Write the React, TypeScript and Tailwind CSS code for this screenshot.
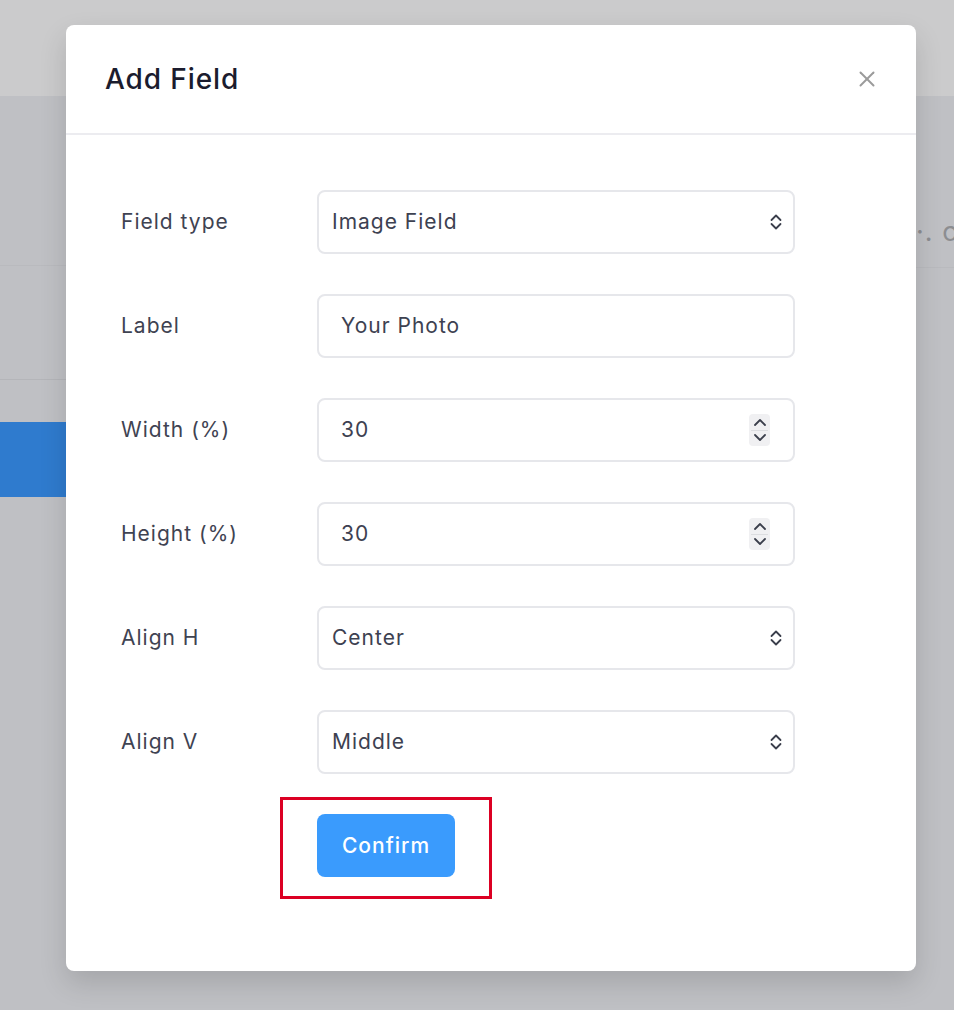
import { X } from "lucide-react";

const font = { fontFamily: "Inter, 'Noto Sans', sans-serif" };

function SelectArrows() {
  return (
    <svg width="14" height="20" viewBox="0 0 14 20" fill="none" stroke="#3b3f4c" strokeWidth="1.8" strokeLinecap="round" strokeLinejoin="round">
      <path d="M2.5 8 L7 3.5 L11.5 8" />
      <path d="M2.5 12 L7 16.5 L11.5 12" />
    </svg>
  );
}

function Spinner() {
  return (
    <div className="flex h-[32px] w-[21px] flex-col items-center justify-between rounded-[4px] bg-[#f0f0f2] py-[2px]">
      <svg width="16" height="13" viewBox="0 0 16 13" fill="none" stroke="#3b3f4c" strokeWidth="1.8" strokeLinecap="round" strokeLinejoin="round">
        <path d="M3 9 L8 4 L13 9" />
      </svg>
      <div className="h-px w-[17px] bg-[#dcdde0]" />
      <svg width="16" height="13" viewBox="0 0 16 13" fill="none" stroke="#3b3f4c" strokeWidth="1.8" strokeLinecap="round" strokeLinejoin="round">
        <path d="M3 4 L8 9 L13 4" />
      </svg>
    </div>
  );
}

const rows = [
  { label: "Field type", value: "Image Field", kind: "select" },
  { label: "Label", value: "Your Photo", kind: "text" },
  { label: "Width (%)", value: "30", kind: "number" },
  { label: "Height (%)", value: "30", kind: "number" },
  { label: "Align H", value: "Center", kind: "select" },
  { label: "Align V", value: "Middle", kind: "select" },
];

export default function App() {
  return (
    <div className="relative h-[1010px] w-full overflow-hidden bg-[#bfc0c4]" style={font}>
      {/* Page behind the overlay */}
      <div className="h-[96px] bg-[#cbcbcc]" />
      <div className="flex justify-between">
        <div className="w-[66px]">
          <div className="h-[169px]" />
          <div className="h-px bg-[#b9babe]" />
          <div className="h-[113px]" />
          <div className="h-px bg-[#b4b5b9]" />
          <div className="h-[42px]" />
          <div className="h-[75px] bg-[#2f7bce]" />
        </div>
        <div className="w-[38px] overflow-hidden">
          <div className="mt-[122px] whitespace-nowrap text-[27px] leading-none tracking-[1px] text-[#8c8d91]">
            ·. c
          </div>
          <div className="mt-[22px] h-px bg-[#b9babe]" />
        </div>
      </div>

      {/* Modal */}
      <div className="absolute left-[66px] top-[25px] flex h-[946px] w-[850px] flex-col rounded-[8px] bg-white shadow-[0_12px_28px_rgba(0,0,0,0.14)]">
        <div className="flex h-[110px] items-center justify-between border-b-2 border-[#ececf0] pl-[39px] pr-[36px]">
          <h2 className="text-[28px] font-medium tracking-[0.9px] text-[#1b1c2e]">Add Field</h2>
          <X size={26} strokeWidth={1.8} className="text-[#9b9b9b]" />
        </div>

        <div className="flex flex-col pt-[55px]">
          {rows.map((r) => (
            <div key={r.label} className="mb-[40px] flex items-center pl-[55px]">
              <span className="w-[196px] text-[21px] tracking-[1px] text-[#3f4352]">{r.label}</span>
              <div
                className={`flex h-[64px] w-[478px] items-center justify-between rounded-[8px] border-2 border-[#e6e7eb] ${
                  r.kind === "select" ? "pl-[13px] pr-[10px]" : "pl-[22px] pr-[23px]"
                }`}
              >
                <span className="text-[21px] tracking-[1px] text-[#3d4151]">{r.value}</span>
                {r.kind === "select" && <SelectArrows />}
                {r.kind === "number" && <Spinner />}
              </div>
            </div>
          ))}

          <div className="-mt-[17px] ml-[214px] w-fit border-[3px] border-[#dc0023] px-[34px] pb-[19px] pt-[14px]">
            <button className="h-[63px] w-[138px] rounded-[8px] bg-[#3a9bfd] text-[21px] font-medium tracking-[1px] text-white">
              Confirm
            </button>
          </div>
        </div>
      </div>
    </div>
  );
}
